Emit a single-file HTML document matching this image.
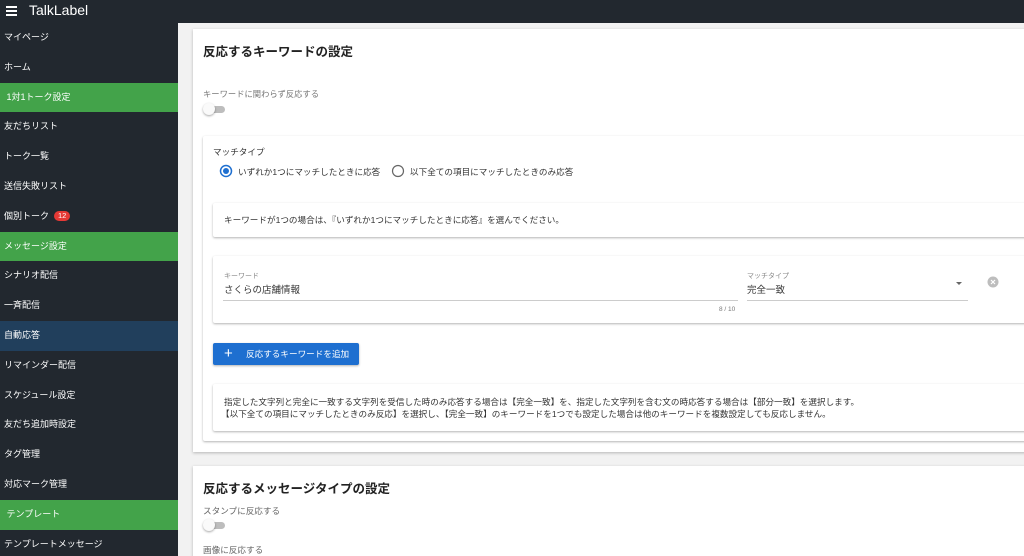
<!DOCTYPE html>
<html style="overflow:hidden"><head><meta charset="utf-8"><style>
*{box-sizing:border-box;margin:0;padding:0}
html,body{width:1024px;height:556px;overflow:hidden}
body{background:#f2f2f2;font-family:"Liberation Sans","Noto Sans CJK JP",sans-serif;position:relative;color:#333}
.top{position:absolute;left:0;top:0;width:1024px;height:23px;background:#22282f;color:#fff}
.top .t{position:absolute;left:29px;top:2px;font-size:14px}
.ham{position:absolute;left:6px;top:6px;width:11px}
.ham i{display:block;height:2px;background:#fff;margin-bottom:2px}
.side{position:absolute;left:0;top:23px;width:178px;height:533px;background:#22282f}
.it{height:29.8px;line-height:29.8px;color:#fff;font-size:9px;padding-left:4px;position:relative}
.g{background:#43a34a}.b{background:#213f5c}
.badge{display:inline-block;background:#e53935;color:#fff;border-radius:6px;font-size:7.5px;line-height:10px;padding:0 4px;margin-left:5px;vertical-align:1px}
.card{position:absolute;background:#fff;box-shadow:0 1px 3px rgba(0,0,0,.25)}
.box{position:absolute;background:#fff;box-shadow:0 1px 2px rgba(0,0,0,.3);border-radius:2px}
.s{font-size:8.6px;position:absolute;white-space:nowrap}
.h{font-weight:bold}
.sw{position:absolute;width:24px;height:12px}
.sw .tr{position:absolute;left:4px;top:3px;width:18px;height:7px;border-radius:4px;background:#bdbdbd}
.sw .k{position:absolute;left:0;top:0;width:12px;height:12px;border-radius:50%;background:#fafafa;box-shadow:0 1px 2px rgba(0,0,0,.35)}
</style></head><body>
<div class="top"><div class="ham"><i></i><i></i><i></i></div><div class="t">TalkLabel</div></div>
<div class="side">
<div class="it">マイページ</div><div class="it">ホーム</div><div class="it g">&nbsp;1対1トーク設定</div><div class="it">友だちリスト</div><div class="it">トーク一覧</div><div class="it">送信失敗リスト</div><div class="it">個別トーク<span class="badge">12</span></div><div class="it g">メッセージ設定</div><div class="it">シナリオ配信</div><div class="it">一斉配信</div><div class="it b">自動応答</div><div class="it">リマインダー配信</div><div class="it">スケジュール設定</div><div class="it">友だち追加時設定</div><div class="it">タグ管理</div><div class="it">対応マーク管理</div><div class="it g">&nbsp;テンプレート</div><div class="it">テンプレートメッセージ</div>
</div>

<div class="card" style="left:193px;top:29px;width:840px;height:423px">
<div class="s h" style="left:10px;top:12px;font-size:12.5px;color:#222">反応するキーワードの設定</div>
<div class="s" style="left:10px;top:59px;color:#777;font-size:8.3px">キーワードに関わらず反応する</div>
<div class="sw" style="left:10px;top:74px"><div class="tr"></div><div class="k"></div></div>
</div>
<div class="box" style="left:203px;top:136px;width:830px;height:305px"></div>
<div class="s" style="left:213px;top:146px;color:#333">マッチタイプ</div>
<svg style="position:absolute;left:219px;top:164px" width="14" height="14"><circle cx="7" cy="7" r="5.5" fill="none" stroke="#1e6fd0" stroke-width="1.5"/><circle cx="7" cy="7" r="3" fill="#1e6fd0"/></svg>
<div class="s" style="left:238px;top:166px">いずれか1つにマッチしたときに応答</div>
<svg style="position:absolute;left:391px;top:164px" width="14" height="14"><circle cx="7" cy="7" r="5.5" fill="none" stroke="#666" stroke-width="1.2"/></svg>
<div class="s" style="left:410px;top:166px">以下全ての項目にマッチしたときのみ応答</div>
<div class="box" style="left:213px;top:203px;width:820px;height:34px"></div>
<div class="s" style="left:224px;top:214px">キーワードが1つの場合は、『いずれか1つにマッチしたときに応答』を選んでください。</div>
<div class="box" style="left:213px;top:256px;width:820px;height:67px"></div>
<div class="s" style="left:224px;top:271px;font-size:7px;color:#888">キーワード</div>
<div class="s" style="left:224px;top:282px;font-size:9.5px">さくらの店舗情報</div>
<div style="position:absolute;left:223px;top:300px;width:515px;height:1px;background:#ccc"></div>
<div class="s" style="left:719px;top:306px;font-size:6.5px;color:#777">8 / 10</div>
<div class="s" style="left:747px;top:271px;font-size:7px;color:#888">マッチタイプ</div>
<div class="s" style="left:747px;top:282px;font-size:9.5px">完全一致</div>
<div style="position:absolute;left:956px;top:282px;border-left:3px solid transparent;border-right:3px solid transparent;border-top:3px solid #666"></div>
<div style="position:absolute;left:747px;top:300px;width:221px;height:1px;background:#ccc"></div>
<svg style="position:absolute;left:987px;top:276px" width="12" height="12"><circle cx="6" cy="6" r="5.5" fill="#bdbdbd"/><path d="M4 4L8 8M8 4L4 8" stroke="#fff" stroke-width="1.2"/></svg>
<div style="position:absolute;left:213px;top:343px;width:146px;height:22px;background:#1e6fd0;border-radius:2px;box-shadow:0 1px 2px rgba(0,0,0,.3);color:#fff;font-size:8.6px;line-height:22px"><span style="position:absolute;left:11px;top:0;font-size:15px">+</span><span style="position:absolute;left:33px">反応するキーワードを追加</span></div>
<div class="box" style="left:213px;top:384px;width:820px;height:47px"></div>
<div class="s" style="left:224px;top:396px">指定した文字列と完全に一致する文字列を受信した時のみ応答する場合は【完全一致】を、指定した文字列を含む文の時応答する場合は【部分一致】を選択します。</div>
<div class="s" style="left:221px;top:408px">【以下全ての項目にマッチしたときのみ反応】を選択し、【完全一致】のキーワードを1つでも設定した場合は他のキーワードを複数設定しても反応しません。</div>

<div class="card" style="left:193px;top:466px;width:840px;height:100px">
<div class="s h" style="left:10px;top:12px;font-size:12.5px;color:#222">反応するメッセージタイプの設定</div>
<div class="s" style="left:10px;top:39px;color:#666">スタンプに反応する</div>
<div class="sw" style="left:10px;top:53px"><div class="tr"></div><div class="k"></div></div>
<div class="s" style="left:10px;top:78px;color:#666">画像に反応する</div>
</div>
</body></html>
